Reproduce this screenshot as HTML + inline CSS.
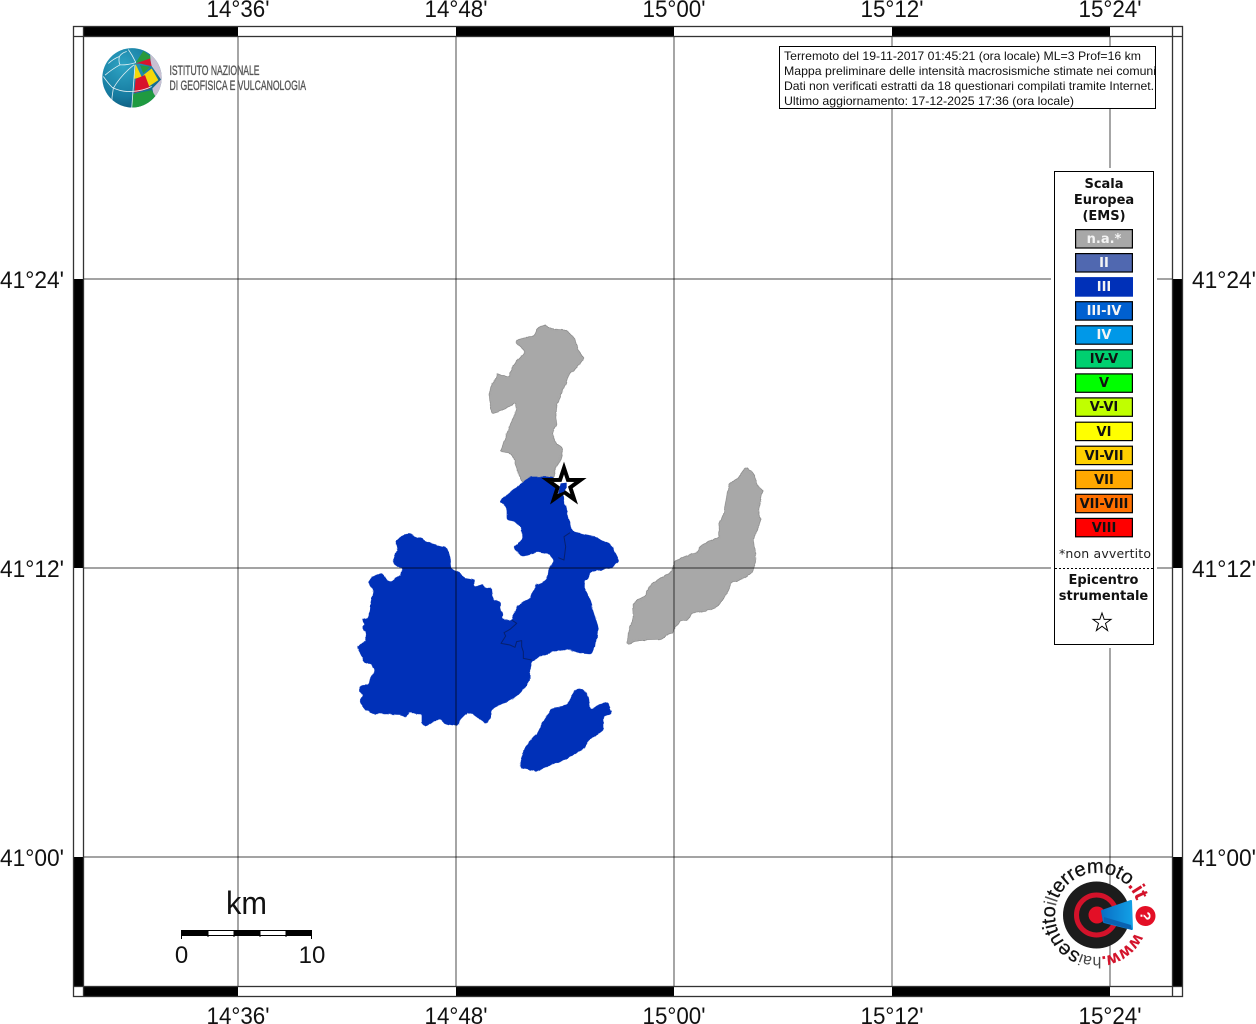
<!DOCTYPE html>
<html lang="it">
<head>
<meta charset="utf-8">
<title>Mappa intensità macrosismiche</title>
<style>
html,body{margin:0;padding:0;background:#fff;width:1256px;height:1024px;overflow:hidden}
svg{display:block}
.t{font-family:"Liberation Sans",sans-serif;font-size:24px;fill:#111}
.b{font-family:"Liberation Sans",sans-serif;font-size:12px;fill:#111}
.l{font-family:"DejaVu Sans",sans-serif;font-size:13px;font-weight:bold;text-anchor:middle;fill:#111}
.w{fill:#f4f4f4}
</style>
</head>
<body>
<svg width="1256" height="1024" viewBox="0 0 1256 1024" xmlns="http://www.w3.org/2000/svg">
<defs>
<filter id="coast" filterUnits="userSpaceOnUse" x="320" y="300" width="480" height="490" color-interpolation-filters="sRGB">
<feGaussianBlur in="SourceGraphic" stdDeviation="1.4" result="bl"/>
<feComponentTransfer in="bl" result="th"><feFuncA type="linear" slope="5" intercept="-2"/></feComponentTransfer>
<feTurbulence type="fractalNoise" baseFrequency=".14" numOctaves="2" seed="4" result="n"/>
<feDisplacementMap in="th" in2="n" scale="3.2" xChannelSelector="R" yChannelSelector="G"/>
</filter>
<filter id="coastg" filterUnits="userSpaceOnUse" x="320" y="300" width="480" height="490" color-interpolation-filters="sRGB">
<feGaussianBlur in="SourceGraphic" stdDeviation="1.4" result="bl"/>
<feComponentTransfer in="bl" result="th"><feFuncA type="linear" slope="5" intercept="-2"/></feComponentTransfer>
<feTurbulence type="fractalNoise" baseFrequency=".14" numOctaves="2" seed="4" result="n"/>
<feDisplacementMap in="th" in2="n" scale="3.2" xChannelSelector="R" yChannelSelector="G" result="d"/>
<feFlood flood-color="#858585" result="fl"/>
<feComposite in="fl" in2="d" operator="in" result="rim"/>
<feMorphology in="d" operator="erode" radius=".7" result="inner"/>
<feMerge><feMergeNode in="rim"/><feMergeNode in="inner"/></feMerge>
</filter>
<linearGradient id="cone" x1="0" x2="1" y1="0" y2="0">
<stop offset="0" stop-color="#0a6fc4"/>
<stop offset="1" stop-color="#12a0e6"/>
</linearGradient>
</defs>
<rect width="1256" height="1024" fill="#fff"/>

<!-- map regions -->
<g filter="url(#coastg)">
<g transform="translate(470,310) scale(.33333)" fill="#a8a8a8">
<polygon points="225,42 245,55 290,60 315,85 325,120 343,145 320,175 300,190 285,230 262,285 258,320 262,345 248,370 262,405 278,412 278,440 260,470 250,510 180,510 155,520 145,490 130,450 125,432 90,425 110,370 120,340 138,300 135,278 105,300 65,313 55,260 62,230 82,188 115,200 130,165 165,125 132,95 160,80 190,78 200,55"/>
</g>
<g transform="translate(610,450) scale(.33333)" fill="#a8a8a8">
<polygon points="408,48 435,75 438,100 460,122 445,180 455,208 445,240 430,265 440,335 425,370 400,385 365,400 350,435 325,470 290,485 245,490 240,510 210,515 190,545 155,570 100,572 75,575 50,585 55,540 70,505 68,458 103,438 120,405 190,358 195,330 260,305 280,280 325,262 325,225 340,190 355,105 385,80"/>
</g>
</g>
<g filter="url(#coast)">
<g transform="translate(340,510) scale(.33333)" fill="#0030b8">
<polygon points="205,70 240,85 275,100 320,112 330,135 335,175 345,180 375,203 403,208 403,232 425,222 437,235 455,232 460,268 482,275 480,295 490,310 487,330 515,330 530,285 570,265 585,225 610,215 622,205 625,180 642,150 630,135 590,128 550,140 540,135 517,110 548,85 545,55 525,35 500,30 500,-5 480,-25 515,-60 545,-80 570,-100 640,-100 665,-60 680,0 695,60 700,65 760,78 810,100 825,125 840,155 810,175 750,187 745,208 730,215 750,270 775,350 770,395 755,433 720,430 690,418 640,425 600,440 575,455 570,480 570,510 550,540 525,565 490,580 460,595 440,645 385,605 360,630 355,650 310,640 305,628 280,635 260,650 245,640 245,612 205,608 198,625 185,615 95,610 70,595 60,575 70,555 55,540 65,525 85,525 90,505 105,482 95,462 75,460 50,410 60,398 80,395 78,370 65,355 75,345 62,325 85,322 90,285 100,240 85,220 95,200 125,190 148,215 180,198 185,177 155,155 170,120 165,95 180,78"/>
<polygon points="708,537 730,535 745,560 750,600 775,585 805,578 818,610 790,620 790,660 750,690 730,720 670,750 590,785 545,775 540,755 555,710 590,670 605,640 635,595 680,585"/>
</g>
</g>
<g transform="translate(340,510) scale(.33333)" fill="none" stroke="#06206f" stroke-width="3" stroke-linejoin="round">
<polyline points="515,330 530,340 510,358 492,368 497,378 483,400 510,405 525,412 530,395 545,392 545,410 550,425 550,445 575,450"/>
<polyline points="655,143 672,150 677,110 672,80 690,68"/>
</g>

<!-- grid -->
<g fill="none">
<path d="M238 36V987M456 36V987M674 36V987M1110 36V987" stroke="#000" stroke-opacity=".5" stroke-width="1.4"/>
<path d="M892 36V987" stroke="#000" stroke-opacity=".65" stroke-width="1"/>
<path d="M83 279H1173M83 568H1173M83 857H1173" stroke="#000" stroke-opacity=".72" stroke-width="1"/>
</g>

<!-- epicentre star -->
<g transform="translate(470,310) scale(.33333)">
<polygon points="282,474 293.8,509.8 331.5,510 301,532.2 312.6,568 282,546 251.4,568 263,532.2 232.5,510 270.2,509.8" fill="#fff" stroke="#000" stroke-width="12" stroke-miterlimit="8"/>
<polygon points="272,520 290,518 290,533 282,545 264,552" fill="#0030b8"/>
</g>

<!-- frame -->
<g fill="#000">
<rect x="83" y="26" width="155" height="10"/>
<rect x="456" y="26" width="218" height="10"/>
<rect x="892" y="26" width="218" height="10"/>
<rect x="83" y="987" width="155" height="10"/>
<rect x="456" y="987" width="218" height="10"/>
<rect x="892" y="987" width="218" height="10"/>
<rect x="73" y="279" width="10" height="289"/>
<rect x="73" y="857" width="10" height="130"/>
<rect x="1173" y="279" width="10" height="289"/>
<rect x="1173" y="857" width="10" height="130"/>
</g>
<g fill="none" stroke="#333" stroke-width="1.3">
<rect x="73.5" y="26.5" width="1109" height="970"/>
<rect x="83.5" y="36.5" width="1089" height="950"/>
<path d="M83.5 26.5V36.5M1172.5 26.5V36.5M83.5 986.5V996.5M1172.5 986.5V996.5M73.5 36.5H83.5M1172.5 36.5H1182.5M73.5 986.5H83.5M1172.5 986.5H1182.5"/>
</g>

<!-- tick labels -->
<g text-anchor="middle">
<text x="238" y="17" class="t" textLength="63" lengthAdjust="spacingAndGlyphs">14°36'</text>
<text x="456" y="17" class="t" textLength="63" lengthAdjust="spacingAndGlyphs">14°48'</text>
<text x="674" y="17" class="t" textLength="63" lengthAdjust="spacingAndGlyphs">15°00'</text>
<text x="892" y="17" class="t" textLength="63" lengthAdjust="spacingAndGlyphs">15°12'</text>
<text x="1110" y="17" class="t" textLength="63" lengthAdjust="spacingAndGlyphs">15°24'</text>
<text x="238" y="1024" class="t" textLength="63" lengthAdjust="spacingAndGlyphs">14°36'</text>
<text x="456" y="1024" class="t" textLength="63" lengthAdjust="spacingAndGlyphs">14°48'</text>
<text x="674" y="1024" class="t" textLength="63" lengthAdjust="spacingAndGlyphs">15°00'</text>
<text x="892" y="1024" class="t" textLength="63" lengthAdjust="spacingAndGlyphs">15°12'</text>
<text x="1110" y="1024" class="t" textLength="63" lengthAdjust="spacingAndGlyphs">15°24'</text>
</g>
<text x="0" y="288" class="t" textLength="64" lengthAdjust="spacingAndGlyphs">41°24'</text>
<text x="0" y="577" class="t" textLength="64" lengthAdjust="spacingAndGlyphs">41°12'</text>
<text x="0" y="866" class="t" textLength="64" lengthAdjust="spacingAndGlyphs">41°00'</text>
<text x="1192" y="288" class="t" textLength="64" lengthAdjust="spacingAndGlyphs">41°24'</text>
<text x="1192" y="577" class="t" textLength="64" lengthAdjust="spacingAndGlyphs">41°12'</text>
<text x="1192" y="866" class="t" textLength="64" lengthAdjust="spacingAndGlyphs">41°00'</text>

<!-- INGV logo -->
<defs>
<radialGradient id="gl" cx=".35" cy=".3" r=".85">
<stop offset="0" stop-color="#2fa4c4"/>
<stop offset=".6" stop-color="#167ba0"/>
<stop offset="1" stop-color="#0c4f70"/>
</radialGradient>
<clipPath id="gc"><circle cx="111" cy="103" r="89"/></clipPath>
</defs>
<g transform="translate(95,43.5) scale(.33333)">
<circle cx="111" cy="103" r="89" fill="url(#gl)"/>
<g clip-path="url(#gc)">
<polygon points="122,58 145,22 175,45" fill="#2a9a3c"/>
<polygon points="165,30 210,70 210,165 180,175 172,135 198,108 168,65" fill="#c9c0d2"/>
<polygon points="122,60 165,45 170,68 135,60" fill="#d8132c"/>
<polygon points="122,62 140,100 118,106" fill="#f4d80a"/>
<polygon points="135,65 165,70 145,90" fill="#2a9a3c"/>
<polygon points="170,75 190,110 160,130 145,95" fill="#f4d80a"/>
<polygon points="122,106 150,95 165,135 118,148" fill="#d8132c"/>
<polygon points="112,152 170,140 185,165 160,195 112,195" fill="#1f9a40"/>
<g fill="none" stroke="#e4f1f4" stroke-width="2.4">
<path d="M120 64L110 196"/>
<path d="M117 64Q78 95 55 134Q50 160 50 186"/>
<path d="M25 99Q40 120 52 132Q80 146 110 144Q145 142 170 129"/>
<path d="M95 24Q80 28 73 39Q70 55 75 64Q100 65 123 57"/>
<path d="M73 39Q55 46 40 60"/>
<path d="M100 18Q112 35 122 56"/>
<path d="M75 64Q50 78 30 95"/>
</g>
</g>
</g>
<g font-family="'Liberation Sans',sans-serif" font-size="13.5" fill="#555" stroke="#555" stroke-width=".35">
<text x="169.5" y="75" textLength="90" lengthAdjust="spacingAndGlyphs">ISTITUTO NAZIONALE</text>
<text x="169.5" y="90" textLength="136.5" lengthAdjust="spacingAndGlyphs">DI GEOFISICA E VULCANOLOGIA</text>
</g>

<!-- info box -->
<rect x="779.5" y="46.5" width="376" height="62" fill="#fff" stroke="#000"/>
<text x="784" y="60" class="b" textLength="357" lengthAdjust="spacingAndGlyphs">Terremoto del 19-11-2017 01:45:21 (ora locale) ML=3 Prof=16 km</text>
<text x="784" y="75" class="b" textLength="372" lengthAdjust="spacingAndGlyphs">Mappa preliminare delle intensità macrosismiche stimate nei comuni</text>
<text x="784" y="90" class="b" textLength="370" lengthAdjust="spacingAndGlyphs">Dati non verificati estratti da 18 questionari compilati tramite Internet.</text>
<text x="784" y="105" class="b" textLength="290" lengthAdjust="spacingAndGlyphs">Ultimo aggiornamento: 17-12-2025 17:36 (ora locale)</text>

<!-- legend -->
<rect x="1051" y="168" width="106" height="480" fill="#fff"/>
<rect x="1054.5" y="171.5" width="99" height="473" fill="#fff" stroke="#000"/>
<text x="1104" y="188" class="l">Scala</text>
<text x="1104" y="204" class="l">Europea</text>
<text x="1104" y="220" class="l">(EMS)</text>
<g stroke="#000" stroke-width="1.2">
<rect x="1075.6" y="229.6" width="56.8" height="18.4" fill="#a8a8a8"/>
<rect x="1075.6" y="253.6" width="56.8" height="18.4" fill="#5068b0"/>
<rect x="1075.6" y="277.7" width="56.8" height="18.4" fill="#0030b8" stroke="#0030b8"/>
<rect x="1075.6" y="301.7" width="56.8" height="18.4" fill="#0060d0"/>
<rect x="1075.6" y="325.8" width="56.8" height="18.4" fill="#0098e8"/>
<rect x="1075.6" y="349.8" width="56.8" height="18.4" fill="#00d070"/>
<rect x="1075.6" y="373.9" width="56.8" height="18.4" fill="#00ff00"/>
<rect x="1075.6" y="397.9" width="56.8" height="18.4" fill="#c0ff00"/>
<rect x="1075.6" y="422.2" width="56.8" height="18.4" fill="#ffff00"/>
<rect x="1075.6" y="446.2" width="56.8" height="18.4" fill="#ffd000"/>
<rect x="1075.6" y="470.3" width="56.8" height="18.4" fill="#ffa800"/>
<rect x="1075.6" y="494.3" width="56.8" height="18.4" fill="#ff7000"/>
<rect x="1075.6" y="518.4" width="56.8" height="18.4" fill="#ff0000"/>
</g>
<text x="1104" y="243" class="l w">n.a.*</text>
<text x="1104" y="267" class="l w">II</text>
<text x="1104" y="291" class="l w">III</text>
<text x="1104" y="315" class="l w">III-IV</text>
<text x="1104" y="339" class="l w">IV</text>
<text x="1104" y="363" class="l">IV-V</text>
<text x="1104" y="387" class="l">V</text>
<text x="1104" y="411" class="l">V-VI</text>
<text x="1104" y="436" class="l">VI</text>
<text x="1104" y="460" class="l">VI-VII</text>
<text x="1104" y="484" class="l">VII</text>
<text x="1104" y="508" class="l">VII-VIII</text>
<text x="1104" y="532" class="l">VIII</text>
<text x="1105" y="558" font-family="'DejaVu Sans',sans-serif" font-size="12.5" text-anchor="middle" fill="#222" textLength="92">*non avvertito</text>
<path d="M1055 568.5H1153" stroke="#000" stroke-width="1" stroke-dasharray="2 2"/>
<text x="1103.5" y="584" class="l">Epicentro</text>
<text x="1103.5" y="600" class="l">strumentale</text>
<polygon points="1102,613 1104.2,619.4 1111,619.4 1105.5,623.4 1107.6,630.5 1102,626.2 1096.4,630.5 1098.5,623.4 1093,619.4 1099.8,619.4" fill="#fff" stroke="#000" stroke-width="1"/>

<!-- scale bar -->
<rect x="181" y="930" width="27" height="6" fill="#000"/>
<rect x="234" y="930" width="26" height="6" fill="#000"/>
<rect x="286" y="930" width="26" height="6" fill="#000"/>
<path d="M181.5 930V939M311.5 930V939M208 930V937M234 930V937M260 930V937M286 930V937M208 930.5H286M208 935.5H286" stroke="#000" stroke-width="1" fill="none"/>
<text x="246.5" y="914" font-family="'Liberation Sans',sans-serif" font-size="32" text-anchor="middle" fill="#111" textLength="41" lengthAdjust="spacingAndGlyphs">km</text>
<text x="181.5" y="963" class="t" text-anchor="middle">0</text>
<text x="312" y="963" class="t" text-anchor="middle">10</text>

<!-- hai sentito logo -->
<circle cx="1096.5" cy="915" r="33.5" fill="#1c1c1c"/>
<circle cx="1096.5" cy="915" r="20" fill="none" stroke="#d3122a" stroke-width="5"/>
<circle cx="1097" cy="915" r="8.5" fill="#e30f26"/>
<polygon points="1102,911 1131,901 1132,929 1104,922" fill="url(#cone)" stroke="url(#cone)" stroke-width="2" stroke-linejoin="round"/>
<polygon points="1104,917 1131,925 1132,930 1104,922" fill="#0a62b0"/>
<circle cx="1145.5" cy="916" r="10" fill="#e30f26"/>
<text x="1145.5" y="921" transform="rotate(90 1145.5 916)" font-family="'Liberation Sans',sans-serif" font-size="15" font-weight="bold" text-anchor="middle" fill="#fff">?</text>
<defs>
<path id="circ" d="M1135 932.8A42 42 0 1 1 1138.4 907.7"/>
</defs>
<text font-family="'Liberation Sans',sans-serif" font-size="20" fill="#111" stroke="#111" stroke-width=".25" letter-spacing="-.2">
<textPath href="#circ"><tspan fill="#d3122a" stroke="#d3122a" font-weight="bold" font-size="17">www.</tspan><tspan fill="#444" stroke="none" font-size="16">hai</tspan>sentito<tspan fill="#555" stroke="none" font-size="18">il</tspan>terremoto<tspan fill="#d3122a" stroke="#d3122a" font-weight="bold">.it</tspan></textPath>
</text>
</svg>
</body>
</html>
